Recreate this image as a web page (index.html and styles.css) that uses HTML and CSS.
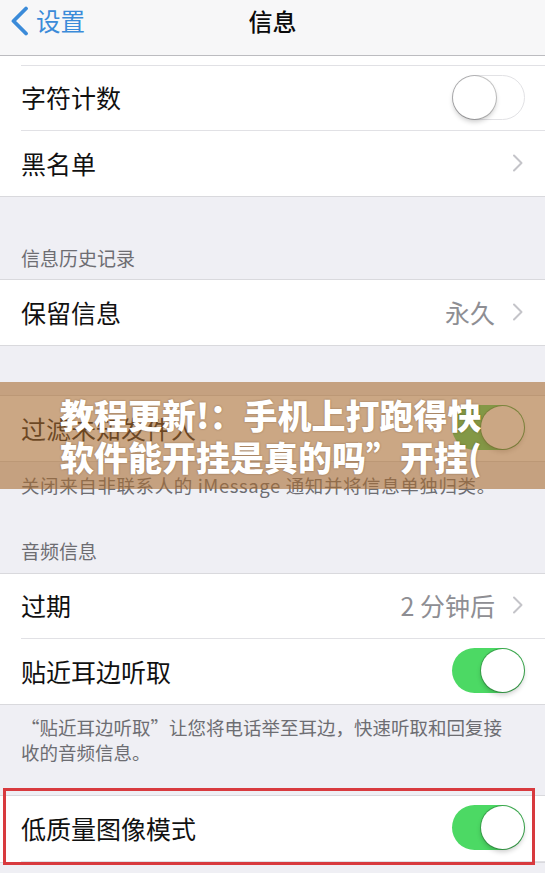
FILE: index.html
```
<!DOCTYPE html>
<html lang="zh-CN">
<head>
<meta charset="utf-8">
<title>信息</title>
<link rel="stylesheet" href="styles.css">
</head>
<body>
<div class="screen">
  <header class="nav">
    <div class="back">
      <svg class="back-icon" width="19" height="30" viewBox="0 0 19 30"><polyline points="16,2.5 3.5,15 16,27.5" fill="none" stroke="#3b8bd9" stroke-width="3.8" stroke-linecap="round" stroke-linejoin="round"/></svg>
      <span>设置</span>
    </div>
    <div class="title">信息</div>
    <div></div>
  </header>

  <section class="group group-first">
    <div class="row row-partial"></div>
    <div class="row"><span>字符计数</span><span class="switch off"><span class="knob"></span></span></div>
    <div class="row"><span>黑名单</span><svg class="chev" width="12" height="20" viewBox="0 0 12 20"><polyline points="2,2.5 9.5,10 2,17.5" fill="none" stroke="#c4c4c9" stroke-width="2" stroke-linecap="round" stroke-linejoin="round"/></svg></div>
  </section>

  <div class="sec-header first-header">信息历史记录</div>
  <section class="group">
    <div class="row"><span>保留信息</span><span class="value"><span>永久</span><svg class="chev" width="12" height="20" viewBox="0 0 12 20"><polyline points="2,2.5 9.5,10 2,17.5" fill="none" stroke="#c4c4c9" stroke-width="2" stroke-linecap="round" stroke-linejoin="round"/></svg></span></div>
  </section>

  <section class="group group-spaced">
    <div class="row"><span>过滤未知发件人</span><span class="switch on"><span class="knob"></span></span></div>
  </section>
  <div class="sec-footer footer-one">关闭来自非联系人的 iMessage 通知并将信息单独归类。</div>

  <div class="sec-header second-header">音频信息</div>
  <section class="group">
    <div class="row"><span>过期</span><span class="value"><span>2 分钟后</span><svg class="chev" width="12" height="20" viewBox="0 0 12 20"><polyline points="2,2.5 9.5,10 2,17.5" fill="none" stroke="#c4c4c9" stroke-width="2" stroke-linecap="round" stroke-linejoin="round"/></svg></span></div>
    <div class="row"><span>贴近耳边听取</span><span class="switch on"><span class="knob"></span></span></div>
  </section>
  <div class="sec-footer footer-two">“贴近耳边听取”让您将电话举至耳边，快速听取和回复接收的音频信息。</div>

  <section class="group group-marked">
    <div class="row row-tall"><span>低质量图像模式</span><span class="switch on"><span class="knob"></span></span></div>
    <div class="highlight"></div>
  </section>

  <div class="banner">
    <span class="banner-line">教程更新!：手机上打跑得快</span>
    <span class="banner-line">软件能开挂是真的吗”开挂(</span>
  </div>
</div>
</body>
</html>
```

FILE: styles.css
```
* { box-sizing: border-box; }

html, body {
  margin: 0;
  padding: 0;
}

body {
  width: 545px;
  height: 873px;
  overflow: hidden;
  background: #efeff4;
  font-family: "Noto Sans CJK SC", "Noto Sans", sans-serif;
  color: #111;
}

.screen {
  position: relative;
  width: 545px;
  height: 873px;
  overflow: hidden;
  background: #efeff4;
}

.nav {
  height: 56px;
  padding-bottom: 13px;
  background: #f7f7f8;
  border-bottom: 1px solid #bcbcc0;
  display: grid;
  grid-template-columns: 1fr auto 1fr;
  align-items: center;
}

.back {
  display: flex;
  align-items: center;
  gap: 7px;
  padding-left: 10px;
  color: #3b8bd9;
  font-size: 24.5px;
  line-height: 30px;
}

.back-icon { display: block; }

.title {
  font-size: 24px;
  font-weight: 500;
  color: #0a0a0a;
  line-height: 30px;
}

.group {
  background: #fff;
  border-top: 1px solid #d9d9dd;
  border-bottom: 1px solid #d9d9dd;
}

.group-first { border-top: none; }

.group-spaced { margin-top: 49px; }

.group-marked {
  position: relative;
  margin-top: 30px;
}

.row {
  height: 65px;
  margin-left: 21px;
  padding-right: 20px;
  padding-bottom: 2px;
  display: flex;
  align-items: center;
  justify-content: space-between;
  border-bottom: 1px solid #e1e1e5;
  font-size: 25px;
  line-height: 30px;
}

.row:last-of-type { border-bottom: none; }

.row-partial { height: 10px; padding-bottom: 0; }

.row-tall { height: 66px; }

.chev { display: block; margin-right: 1px; }

.value {
  display: flex;
  align-items: center;
  gap: 17px;
  color: #8e8e93;
}

.switch {
  width: 73px;
  height: 45px;
  border-radius: 23px;
  padding: 1px;
  display: flex;
  align-items: center;
}

.switch.on {
  background: #4cd964;
  justify-content: flex-end;
}

.switch.off {
  background: #fff;
  border: 1.5px solid #e2e2e5;
  padding: 0;
  justify-content: flex-start;
}

.knob {
  width: 43px;
  height: 43px;
  border-radius: 50%;
  background: #fff;
  box-shadow: 0 0 0 1px rgba(0, 0, 0, 0.22), 0 3px 5px rgba(0, 0, 0, 0.2);
}

.sec-header {
  padding: 0 21px;
  font-size: 19px;
  line-height: 22px;
  color: #6d6d72;
}

.first-header {
  height: 82px;
  padding-top: 50px;
}

.second-header {
  height: 76px;
  padding-top: 43px;
}

.sec-footer {
  padding: 0 34px 0 21px;
  font-size: 18.5px;
  color: #6d6d72;
}

.footer-one {
  padding-top: 11px;
  line-height: 24px;
  letter-spacing: 0.6px;
}

.footer-two {
  padding-top: 10px;
  line-height: 25px;
  margin-bottom: 2px;
}

.highlight {
  position: absolute;
  top: -8px;
  bottom: -3px;
  left: 3px;
  right: 10px;
  border: 3px solid #d83a3e;
}

.banner {
  position: absolute;
  left: 0;
  right: 0;
  top: 382px;
  height: 107px;
  padding-left: 60px;
  background: rgba(168, 108, 50, 0.6);
  display: flex;
  flex-direction: column;
  justify-content: center;
  color: #fff;
  font-size: 34px;
  font-weight: 900;
  line-height: 42px;
  text-shadow: 0 0 2px rgba(60, 30, 0, 0.45);
}

.banner-line {
  display: block;
  white-space: nowrap;
}
```
